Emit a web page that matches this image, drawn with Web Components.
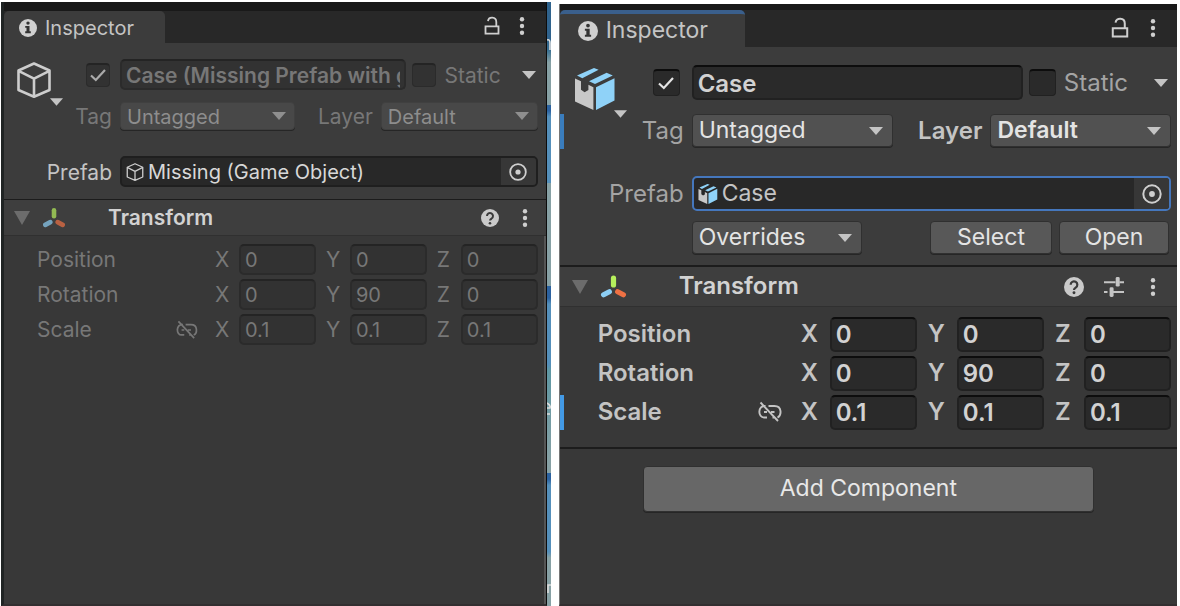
<!DOCTYPE html>
<html lang="en">
<head>
<meta charset="utf-8">
<title>Inspector</title>
<style>
  html, body { margin: 0; min-height: 100vh; background: #fff; }
  body { display: flex; box-sizing: border-box; padding: 0 3px 0 1px; font-family: Inter, "Noto Sans", sans-serif; overflow: hidden; }
  inspector-panel {
    --text: #c4c4c4; --muted: #7c7c7c; --label: #c4c4c4; --value: #d2d2d2; --weight: 400;
  }
  inspector-panel.missing {
    flex: 544 1 0; margin-top: 2px;
    --fs: 20px; --fs-label: 21px; --fs-num: 20px; --strip: 9px; --tabbar: 32px; --tab: 161px; --tab-pad: 15px; --glyph: 18px; --gap: 8px;
    --edge: 8px; --top: 16px; --row: 31px; --drop: 28px; --box: 24px; --s1: 12px; --s2: 26px; --bottom: 12px;
    --icon-col: 58px; --label-col: 50px; --icon: 36px; --icon-pad: 12px; --check-gap: 10px; --arrow: 14px;
    --head: 37px; --pad: 33px; --first: 8px; --vgap: 4px; --vec-label: 178px; --axis: 24px; --axis-gap: 10px; --link-gap: 17px;
    --label: #777; --value: #777; --field: #323232; --field-line: #2b2b2b; --field-top: #242424; --drop-bg: #484848; --drop-line: #404040;
    --drop-text: #8d8d8d; --drop-arrow: #8f8f8f; --object-line: #1f1f1f; --layer-gap: 23px; --title-gap: 43px; --fade: .7;
  }
  inspector-panel.linked {
    flex: 620 1 0; margin-top: 4px;
    --fs: 23px; --fs-label: 24px; --fs-num: 24px; --strip: 6px; --tabbar: 37px; --tab: 185px; --tab-pad: 18px; --glyph: 20px; --gap: 8px;
    --edge: 6px; --top: 18px; --row: 35px; --drop: 33px; --box: 27px; --s1: 14px; --s2: 29px; --bottom: 11px;
    --icon-col: 74px; --label-col: 50px; --icon: 42px; --icon-pad: 14px; --check-gap: 12px; --arrow: 16px;
    --head: 42px; --pad: 38px; --first: 10px; --vgap: 4px; --vec-label: 203px; --axis: 29px; --axis-gap: 11px; --link-gap: 19px;
    --field: #2a2a2a; --field-line: #212121; --field-top: #0d0d0d; --drop-bg: #515151; --drop-line: #303030;
    --drop-text: #e4e4e4; --drop-arrow: #c4c4c4; --object-line: #4577bd; --layer-gap: 25px; --title-gap: 53px; --fade: 1; --weight: 600;
  }
</style>
</head>
<body>
<inspector-panel class="missing">
  <object-header missing name="Case (Missing Prefab with guid)" object="Missing (Game Object)"></object-header>
  <component-header></component-header>
  <vector-row label="Position" x="0" y="0" z="0" disabled></vector-row>
  <vector-row label="Rotation" x="0" y="90" z="0" disabled></vector-row>
  <vector-row label="Scale" x="0.1" y="0.1" z="0.1" link disabled></vector-row>
</inspector-panel>
<scene-sliver></scene-sliver>
<inspector-panel class="linked" focused>
  <object-header name="Case" object="Case"></object-header>
  <component-header presets></component-header>
  <vector-row label="Position" x="0" y="0" z="0"></vector-row>
  <vector-row label="Rotation" x="0" y="90" z="0"></vector-row>
  <vector-row label="Scale" x="0.1" y="0.1" z="0.1" link override></vector-row>
  <add-component slot="footer"></add-component>
</inspector-panel>

<script>
const ICONS = {
  info: ['0 0 18 18', '<circle cx="9" cy="9" r="9" fill="#d0d0d0"/><path d="M9 2.4a1.700 1.700 0 1 1 0 3.400 1.700 1.700 0 0 1 0-3.400zM6.200 7h4.300v5.300h1.300V14.200H6.200v-1.900h1.300V8.800H6.200z" fill="#333"/>'],
  help: ['0 0 18 18', '<circle cx="9" cy="9" r="9" fill="#cacaca"/><path d="M6 7a3 3 0 1 1 4.600 2.500C9.500 10.200 9 10.500 9 11.600" fill="none" stroke="#3a3a3a" stroke-width="2"/><circle cx="9" cy="14.200" r="1.300" fill="#3a3a3a"/>'],
  lock: ['0 0 18 18', '<path d="M2.500 9.300h13v7.400h-13z M13.300 9.300V5C13.300-.600 5.500-.600 5 4.200" fill="none" stroke="#cfcfcf" stroke-width="1.800"/>'],
  dots: ['0 0 6 18', '<g fill="#cfcfcf"><circle cx="3" cy="2.300" r="2.200"/><circle cx="3" cy="9" r="2.200"/><circle cx="3" cy="15.700" r="2.200"/></g>'],
  presets: ['0 0 20 20', '<g fill="#c4c4c4"><path d="M0 4.200h11.500v2H0zM15.500 4.200H20v2h-4.500zM0 14h3.500v2H0zM8 14h12v2H8z"/><rect x="11.700" y="0" width="4" height="9.600" rx="1.400"/><rect x="5.600" y="10.300" width="4" height="9.600" rx="1.400"/></g>'],
  arrow: ['0 0 14 8', '<path d="M0 0h14L7 8z" fill="currentColor"/>'],
  fold: ['0 0 16 14', '<path d="M0 0h16L8 14z" fill="#6c6c6c"/>'],
  cube: ['0 0 36 36', '<path d="M18 1.500 33.500 8.500v19.500L18 34.700 2.500 28V8.500zM2.500 8.800 18 16.600l15.500-7.800M18 16.600V34" fill="none" stroke="#cdcdcd" stroke-width="2.600" stroke-linejoin="round"/>'],
  prefab: ['0 0 40 42', '<path d="M0 10.500 6 13.300v8.400l3.600 2.600 3.800-2.400v-5.200l5 2.600v22.800L0 33.400z" fill="#c8c8c8"/><path d="M21 19.300 39.500 10.200v22.400L21 42zM2 7.600 19 0l4.600 1.700L7.300 10.300zM14 13.200 31.600 4.800l6.200 2.600L20 16z" fill="#8fd2f8"/>'],
  axes: ['0 0 24 22', '<g stroke-linecap="round" stroke-width="5"><path d="M12 2.500v6.500" stroke="#b6ef5c"/><path d="M8 15.500 2.500 18.500" stroke="#8dcff5"/><path d="M16 15.500l5.500 3" stroke="#ee7144"/></g>'],
  target: ['0 0 20 20', '<circle cx="10" cy="10" r="8.700" fill="none" stroke="#cfcfcf" stroke-width="2"/><circle cx="10" cy="10" r="2.900" fill="#cfcfcf"/>'],
  unlink: ['0 0 24 20', '<path d="M8 4C0 3 0 16 7 15.500h2.500M6.500 10h3M11 4h6c8 0 7 10 3 11.500M15 15.500h1.500M13.500 10H17M3 .500l17.500 18.500" fill="none" stroke="currentColor" stroke-width="1.900"/>'],
  check: ['0 0 16 14', '<path d="M1 7.500 5.800 12 15 2" fill="none" stroke="currentColor" stroke-width="2.200"/>']
};
const icon = (name, cls = name) =>
  `<svg class="${cls}" viewBox="${ICONS[name][0]}" aria-hidden="true">${ICONS[name][1]}</svg>`;

const BASE = `
  *, *::before { box-sizing: border-box; }
  svg { display: block; flex: none; overflow: visible; }
  button, input, select { font: inherit; margin: 0; color: inherit; min-width: 0; opacity: 1; outline: none; }
  button { border: 0; padding: 0; background: none; }
  .dots { height: var(--glyph); width: 6px; }
  .field { height: var(--row); background: var(--field); color: var(--value); border: 2px solid var(--field-line);
    border-top-color: var(--field-top); border-radius: 5px; padding: 0 4px; }
  .drop { position: relative; display: flex; height: var(--drop); }
  .drop select { appearance: none; width: 100%; height: 100%; padding: 1px 24px 0 6px; background: var(--drop-bg);
    border: 1px solid var(--drop-line); border-radius: 4px; color: var(--drop-text); box-shadow: 0 1px #262626; }
  .drop svg { position: absolute; right: 9px; top: calc(50% - 4px); width: var(--arrow); height: 8px; color: var(--drop-arrow); pointer-events: none; }
`;

class View extends HTMLElement {
  connectedCallback() {
    if (this.shadowRoot) return;
    const root = this.attachShadow({ mode: 'open' });
    const t = document.createElement('template');
    t.innerHTML = `<style>${BASE}${this.styles()}</style>${this.markup()}`;
    root.append(t.content.cloneNode(true));
  }
  get(name) { return this.getAttribute(name) || ''; }
}

customElements.define('inspector-panel', class extends View {
  styles() { return `
    :host { display: flex; flex-direction: column; min-width: 0; box-sizing: border-box; background: #383838; color: var(--text); font-size: var(--fs); line-height: 1.200;
      border-left: 1px solid #777; border-bottom: 2px solid #322f30; }
    :host(:not([focused])) { border-left: 3px solid #202424; border-right: 1px solid #0c0c0c; box-shadow: inset -2px 0 #555; }
    .strip { height: var(--strip); background: #191919; }
    header { display: flex; align-items: center; height: var(--tabbar); background: #282828; }
    .tab { display: flex; align-items: center; gap: var(--gap); align-self: stretch; width: var(--tab); padding: 2px 0 0 var(--tab-pad);
      background: #3c3c3c; border-radius: 5px 5px 0 0; }
    :host([focused]) .tab { padding-top: 0; border-top: 4px solid #3a5f8c; }
    .info { width: var(--glyph); height: var(--glyph); }
    .tools { display: flex; gap: 18px; margin: 0 21px 2px auto; align-items: center; }
    :host([focused]) .tools { gap: 20px; }
    .lock { width: var(--glyph); height: var(--glyph); }
    main { display: block; }
    :host([focused]) main { border-bottom: 2px solid #1c1c1c; padding-bottom: 13px; }
  `; }
  markup() { return `
    <div class="strip"></div>
    <header><button class="tab">${icon('info')}<span>Inspector</span></button>
      <div class="tools"><button aria-label="Lock">${icon('lock')}</button><button aria-label="Menu">${icon('dots')}</button></div></header>
    <main><slot></slot></main><slot name="footer"></slot>`; }
});

customElements.define('object-header', class extends View {
  styles() { return `
    :host { display: grid; position: relative; grid-template-columns: var(--icon-col) var(--label-col) minmax(0, 1fr); column-gap: 0;
      padding: var(--top) var(--edge) var(--bottom) 0; background: #3c3c3c; }
    .picker { grid-row: 1 / 3; display: flex; align-items: flex-start; padding: 3px 0 0 var(--icon-pad); }
    .picker .big { width: var(--icon); height: var(--icon); }
    .picker .arrow { width: 13px; height: 8px; margin: var(--icon) 0 0 -2px; }
    .active { display: flex; align-items: center; justify-content: flex-end; margin-right: calc(var(--check-gap) - var(--gap)); }
    .tick { position: relative; display: flex; align-items: center; justify-content: center; width: var(--box); height: var(--box); color: #e4e4e4; }
    .tick input { position: absolute; inset: 0; width: 100%; height: 100%; appearance: none; background: var(--field);
      border: 1px solid var(--field-line); border-top: 2px solid var(--field-top); border-radius: 4px; }
    .tick svg { position: relative; width: 16px; height: 14px; pointer-events: none; }
    :host([missing]) .tick { color: #aaa; }
    .line { display: flex; align-items: center; margin-left: var(--gap); min-width: 0; }
    .line .field { flex: 1; font-weight: 600; font-size: var(--fs-label); padding-top: 2px; }
    .line .tick { margin: 0 var(--gap) 0 6px; }
    label { font-size: var(--fs-label); padding-top: 2px; }
    .static { margin-right: 21px; color: var(--label); }
    :host(:not([missing])) .static, :host(:not([missing])) .tag, :host(:not([missing])) .of { color: #a4a4a4; }
    :host(:not([missing])) .static { margin-right: 25px; }
    .line > .arrow { width: var(--arrow); height: 8px; margin-right: 2px; }
    .tag, .of { text-align: right; color: var(--label); align-self: center; }
    .tag, .second { margin-top: var(--s1); }
    .of { grid-column: 1 / 3; }
    .of, .third { margin-top: var(--s2); }
    :host([missing]) .of { color: var(--text); }
    .second .drop:first-child { flex: 174 1 0; }
    .second .drop:last-child { flex: 156 1 0; }
    .layer { margin: 0 var(--gap) 0 var(--layer-gap); color: var(--label); font-weight: var(--weight); }
    .second .drop:last-child select { font-weight: var(--weight); }
    .object { display: flex; align-items: center; flex: 1; min-width: 0; height: var(--row); background: #282828; border: 2px solid var(--object-line);
      border-radius: 5px; overflow: hidden; padding-left: 4px; gap: 4px; color: var(--text); }
    :host([missing]) .object { color: #d8d8d8; }
    .object .small { width: var(--glyph); height: var(--glyph); }
    .object input { flex: 1; background: none; border: 0; padding: 1px 0 0; }
    .object button { display: grid; place-items: center; width: 35px; height: 100%; background: #373737; }
    .target { width: var(--glyph); height: var(--glyph); }
    .fourth { grid-column: 3; display: flex; justify-content: space-between; margin: 10px 2px 0 var(--gap); }
    .fourth .drop { width: 170px; }
    .buttons { display: flex; gap: 7px; }
    .buttons button { height: var(--drop); width: 110px; background: #585858; border: 1px solid #303030; border-radius: 4px; color: #e4e4e4; box-shadow: 0 1px #262626; }
    .buttons button:first-child { width: 122px; }
    .mark { position: absolute; left: 0; top: calc(var(--top) + var(--row) + var(--s1)); width: 4px; height: var(--row); background: #3a7dbd; }
    :host([missing]) .mark { display: none; }
  `; }
  markup() {
    const off = this.hasAttribute('missing'), d = off ? 'disabled' : '', pic = off ? 'cube' : 'prefab';
    return `
    <button class="picker" aria-label="Icon">${icon(pic, 'big')}${icon('arrow')}</button>
    <div class="active"><span class="tick"><input type="checkbox" aria-label="Active" checked ${d}>${icon('check')}</span></div>
    <div class="line"><input class="field" aria-label="Name" value="${this.get('name')}" ${d}>
      <span class="tick"><input type="checkbox" id="static" ${d}></span><label class="static" for="static">Static</label>${icon('arrow')}</div>
    <label class="tag" for="tag">Tag</label>
    <div class="line second"><span class="drop"><select id="tag" ${d}><option>Untagged</option></select>${icon('arrow')}</span>
      <label class="layer" for="layer">Layer</label><span class="drop"><select id="layer" ${d}><option>Default</option></select>${icon('arrow')}</span></div>
    <label class="of" for="object">Prefab</label>
    <div class="line third"><div class="object">${icon(pic, 'small')}<input id="object" value="${this.get('object')}" readonly>
      <button aria-label="Pick object">${icon('target')}</button></div></div>
    ${off ? '' : `<div class="fourth"><span class="drop"><select aria-label="Overrides"><option>Overrides</option></select>${icon('arrow')}</span>
      <span class="buttons"><button>Select</button><button>Open</button></span></div>`}
    <span class="mark"></span>`;
  }
});

customElements.define('component-header', class extends View {
  styles() { return `
    :host { display: flex; box-sizing: border-box; align-items: center; height: var(--head); background: #3e3e3e; border-top: 1px solid #1c1c1c; border-bottom: 1px solid #303030;
      padding: 0 18px 0 10px; margin-bottom: var(--first); }
    :host([presets]) { border-top-width: 2px; padding: 0 21px 0 12px; }
    .fold { width: 16px; height: 14px; }
    .axes { width: calc(var(--glyph) + 4px); height: 22px; margin-left: 13px; opacity: var(--fade); }
    :host([presets]) .axes { width: 25px; height: 24px; }
    h2 { margin: 0 auto 0 var(--title-gap); font-size: var(--fs-label); font-weight: 600; color: #d2d2d2; }
    .end { display: flex; gap: 23px; align-items: center; }
    :host([presets]) .end { gap: 20px; }
    :host([presets]) .dots { margin-left: 6px; }
    .help, .presets { width: var(--glyph); height: var(--glyph); }
  `; }
  markup() { return `<button aria-label="Fold">${icon('fold')}</button>${icon('axes')}<h2>Transform</h2>
    <span class="end"><button aria-label="Help">${icon('help')}</button>${this.hasAttribute('presets') ? `<button aria-label="Presets">${icon('presets')}</button>` : ''}
    <button aria-label="Menu">${icon('dots')}</button></span>`; }
});

customElements.define('vector-row', class extends View {
  styles() { return `
    :host { display: flex; position: relative; align-items: center; gap: var(--axis-gap); padding: 0 var(--edge) 0 var(--pad); margin-bottom: var(--vgap);
      color: var(--label); font-weight: var(--weight); font-size: var(--fs-label); }
    .name { display: flex; align-items: center; justify-content: space-between; width: calc(var(--vec-label) - var(--axis-gap)); }
    .unlink { width: calc(var(--glyph) + 5px); height: var(--glyph); margin-right: calc(var(--link-gap) - var(--axis-gap)); }
    .axis { display: flex; flex: 1 1 0; align-items: center; min-width: 0; }
    .axis span { width: var(--axis); }
    .axis input { flex: 1; width: 0; font-size: var(--fs-num); }
    :host([override])::before { content: ""; position: absolute; left: 0; top: 0; width: 4px; height: 100%; background: #439ae6; }
  `; }
  markup() {
    const d = this.hasAttribute('disabled') ? 'disabled' : '';
    return `<div class="name"><span>${this.get('label')}</span>${this.hasAttribute('link') ? icon('unlink') : ''}</div>` +
      ['x', 'y', 'z'].map(a => `<label class="axis"><span>${a.toUpperCase()}</span><input class="field" value="${this.get(a)}" ${d}></label>`).join('');
  }
});

customElements.define('add-component', class extends View {
  styles() { return `
    :host { display: flex; justify-content: center; padding-top: 17px; }
    button { width: 73%; height: 46px; background: #676767; border: 1px solid #303030; border-radius: 4px; color: #e8e8e8; box-shadow: 0 1px #262626; }
  `; }
  markup() { return `<button>Add Component</button>`; }
});

customElements.define('scene-sliver', class extends View {
  styles() { return `
    :host { display: block; flex: none; width: 4px; height: calc(100vh - 2px); margin: 2px 8px 0 0; overflow: hidden;
      background: linear-gradient(#30638d 0 6%, #3a7193 8%, #87a1a5 10% 17%, #2c62a0 17% 18%, #5590bb 19% 30%, #87a1a5 30% 47%, #2c62a0 47% 49%, #5590bb 50% 60%, #5f98a4 61%, #87a1a5 76% 78%, #2c62a0 78% 79%, #5590bb 80% 91%, #87a1a5 92%); }
    svg { width: 4px; height: 604px; }
  `; }
  markup() { return `<svg viewBox="0 0 4 604" aria-hidden="true"><g fill="none" stroke="#ddd" stroke-width="1.600"><path d="M0 38q3-1 3 3v7"/><path d="M0 401q4 2 3 5H0M0 412h3"/><path d="M1 591v-8h3"/></g></svg>`; }
});
</script>
</body>
</html>
